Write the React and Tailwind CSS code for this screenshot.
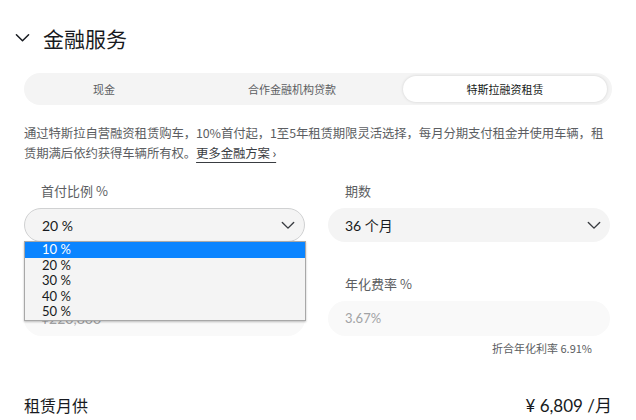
import React from 'react';

const cjk = { fontFamily: "'Noto Sans CJK SC', 'Noto Sans', sans-serif" };
const num = { fontFamily: "Lato, 'Noto Sans CJK SC', sans-serif" };

function Chevron({ className }) {
  return (
    <svg viewBox="0 0 16 10" className={className} fill="none" stroke="currentColor" strokeWidth="1.6" strokeLinecap="round" strokeLinejoin="round">
      <path d="M1.5 1.5 8 8l6.5-6.5" />
    </svg>
  );
}

export default function App() {
  const options = ['10 %', '20 %', '30 %', '40 %', '50 %'];

  return (
    <div className="w-[636px] h-[420px] overflow-hidden bg-white text-[#171a20] px-6" style={cjk}>
      {/* Header */}
      <div className="flex items-center h-[36px] mt-[20px] -ml-[9px]">
        <Chevron className="w-[15px] h-[10px] text-[#171a20]" />
        <h2 className="ml-[13px] text-[21px] font-normal leading-none">金融服务</h2>
      </div>

      {/* Tabs */}
      <div className="mt-[17px] h-[32px] rounded-full bg-[#f4f4f4] flex items-center p-[3px] text-[11px] text-[#5c5e62]">
        <div className="w-[154px] text-center">现金</div>
        <div className="w-[222px] text-center">合作金融机构贷款</div>
        <div className="w-[204px] h-full rounded-full bg-white shadow-[0_0_3px_rgba(0,0,0,0.15)] flex items-center justify-center text-[#171a20]">
          特斯拉融资租赁
        </div>
      </div>

      {/* Description */}
      <p className="mt-[18px] text-[12.4px] tracking-[-0.1px] leading-[20px] text-[#5c5e62]">
        通过特斯拉自营融资租赁购车，10%首付起，1至5年租赁期限灵活选择，每月分期支付租金并使用车辆，租赁期满后依约获得车辆所有权。
        <span className="text-[#393c41] underline underline-offset-4 decoration-[#393c41]">更多金融方案 ›</span>
      </p>

      {/* Form */}
      <div className="mt-[18px] grid grid-cols-[281px_282px] gap-x-[23px]">
        <div className="relative">
          <div className="pl-[17px] text-[13px] leading-[20px] text-[#5c5e62]">首付比例 %</div>
          <div className="mt-[7px] h-[34px] rounded-full bg-[#f4f4f4] border border-[#d0d1d2] flex items-center justify-between pl-[17px] pr-[9px]">
            <span className="text-[14px]" style={num}>20 %</span>
            <Chevron className="w-[14px] h-[9px] text-[#393c41]" />
          </div>
          <div className="mt-[32px] h-[20px]" aria-hidden="true" />
          <div className="mt-[7px] h-[35px] rounded-full bg-[#f9f9f9] flex items-center pl-[17px]">
            <span className="text-[14px] text-[#a2a3a5]" style={num}>¥220,800</span>
          </div>

          {/* Open dropdown list */}
          <div className="absolute left-0 top-[60px] w-[282px] bg-[#f4f4f4] border border-[#a8a8a8] shadow-[0_1px_2px_rgba(0,0,0,0.25)]" style={num}>
            {options.map((o, i) => (
              <div
                key={o}
                className={
                  'h-[15.5px] pl-[17px] text-[13px] leading-[15.5px] ' +
                  (i === 0 ? 'bg-[#0a84ff] text-white' : 'text-[#171a20]')
                }
              >
                {o}
              </div>
            ))}
          </div>
        </div>

        <div>
          <div className="pl-[17px] text-[13px] leading-[20px] text-[#5c5e62]">期数</div>
          <div className="mt-[7px] h-[34px] rounded-full bg-[#f4f4f4] flex items-center justify-between pl-[17px] pr-[9px]">
            <span className="text-[14px]" style={num}>36 个月</span>
            <Chevron className="w-[14px] h-[9px] text-[#393c41]" />
          </div>
          <div className="mt-[32px] pl-[17px] text-[13px] leading-[20px] text-[#5c5e62]">年化费率 %</div>
          <div className="mt-[7px] h-[35px] rounded-full bg-[#f9f9f9] flex items-center pl-[17px]">
            <span className="text-[13px] text-[#a2a3a5]" style={num}>3.67%</span>
          </div>
          <div className="mt-[4px] pr-[18px] text-right text-[11px] text-[#5c5e62]">折合年化利率 6.91%</div>
        </div>
      </div>

      {/* Monthly */}
      <div className="mt-[36px] flex items-center justify-between">
        <span className="text-[16px]">租赁月供</span>
        <span className="text-[17px]" style={num}>¥ 6,809 /月</span>
      </div>
    </div>
  );
}
